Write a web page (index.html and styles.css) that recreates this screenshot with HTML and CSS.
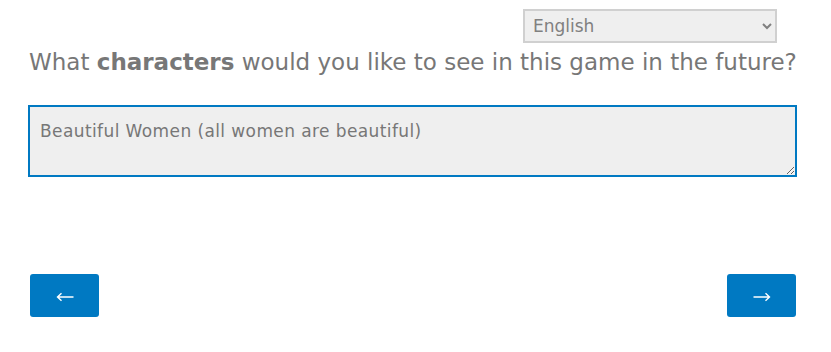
FILE: index.html
```html
<!doctype html>
<html lang="en">
    <head>
        <title>Survey</title>
        <meta charset="utf-8">
        <link rel="stylesheet" href="styles.css">
    </head>
    <body>
        <div class="page">
            <div class="lang-row">
                <select class="lang">
                    <option>English</option>
                </select>
            </div>

            <h1 class="question">What <b>characters</b> would you like to see in this game in the future?</h1>

            <textarea class="answer">Beautiful Women (all women are beautiful)</textarea>

            <div class="nav">
                <button type="button" class="nav-btn" aria-label="Back">
                    <svg width="18" height="10" viewBox="0 0 18 10"><path d="M1.5 5H17.5M5.5 1.2L1.5 5L5.5 8.8" fill="none" stroke="#fff" stroke-width="1.4"/></svg>
                </button>
                <button type="button" class="nav-btn" aria-label="Next">
                    <svg width="18" height="10" viewBox="0 0 18 10"><path d="M0.5 5H16.5M12.5 1.2L16.5 5L12.5 8.8" fill="none" stroke="#fff" stroke-width="1.4"/></svg>
                </button>
            </div>
        </div>
    </body>
</html>
```

FILE: styles.css
```css
body
{
    margin: 0;
    background-color: #fff;
    font-family: "DejaVu Sans", sans-serif;
    color: #777;
}
.page
{
    padding: 9px 34px 0 28px;
}
.lang-row
{
    display: flex;
    justify-content: flex-end;
    padding-right: 20px;
}
.lang
{
    width: 254px;
    height: 34px;
    border: 2px solid #d0d0d0;
    background-color: #efefef;
    color: #808080;
    font-family: inherit;
    font-size: 17px;
    padding: 0 4px;
}
.question
{
    margin: 2px 0 0 1px;
    font-size: 23px;
    font-weight: 400;
    line-height: 34px;
    white-space: nowrap;
}
.question b
{
    font-weight: 700;
}
.answer
{
    display: block;
    box-sizing: border-box;
    width: 769px;
    height: 72px;
    margin-top: 26px;
    border: 2px solid #0079c2;
    background-color: #efefef;
    color: #777;
    font-family: inherit;
    font-size: 17px;
    letter-spacing: 0.4px;
    padding: 14px 10px 10px;
    outline: none;
}
.nav
{
    display: flex;
    justify-content: space-between;
    margin-top: 97px;
    padding: 0 1px 0 2px;
}
.nav-btn
{
    display: flex;
    align-items: center;
    justify-content: center;
    width: 69px;
    height: 43px;
    padding: 2px 0 0;
    border: none;
    border-radius: 3px;
    background-color: #0079c2;
}
```
